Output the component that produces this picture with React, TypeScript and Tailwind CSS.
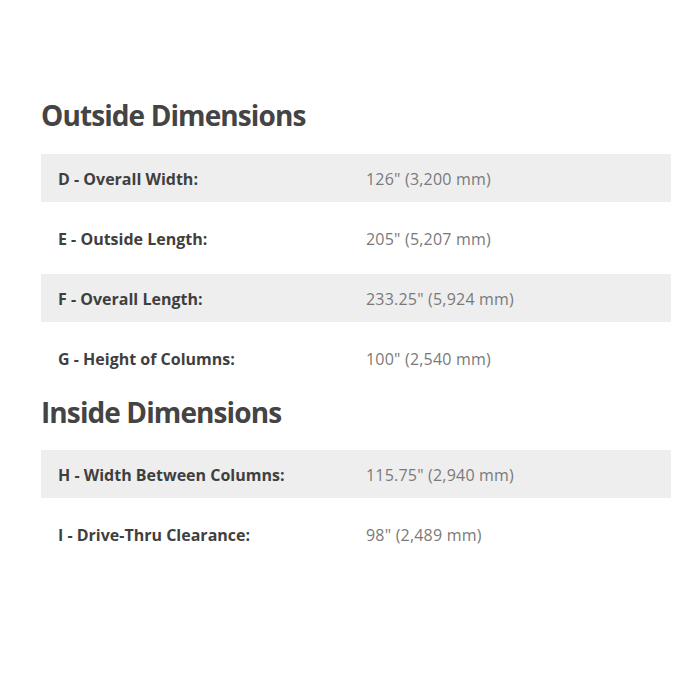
import React from "react";

const outside = [
  { label: "D - Overall Width:", value: "126\" (3,200 mm)" },
  { label: "E - Outside Length:", value: "205\" (5,207 mm)" },
  { label: "F - Overall Length:", value: "233.25\" (5,924 mm)" },
  { label: "G - Height of Columns:", value: "100\" (2,540 mm)" },
];

const inside = [
  { label: "H - Width Between Columns:", value: "115.75\" (2,940 mm)" },
  { label: "I - Drive-Thru Clearance:", value: "98\" (2,489 mm)" },
];

const SpecRows = ({ rows }: { rows: { label: string; value: string }[] }) => (
  <div className="flex flex-col gap-3">
    {rows.map((row, i) => (
      <div
        key={row.label}
        className={`flex items-center h-12 pt-0.5 ${i % 2 === 0 ? "bg-[#eeeeee]" : "bg-white"}`}
      >
        <div className="w-[325px] pl-[17px] text-[16px] font-bold text-[#3f3f3f]">
          {row.label}
        </div>
        <div className="text-[16px] text-[#7a7a7a] tracking-[0.2px]">{row.value}</div>
      </div>
    ))}
  </div>
);

export default function App() {
  return (
    <div
      className="w-[700px] h-[700px] bg-white pt-[98px] pl-[41px]"
      style={{ fontFamily: '"Open Sans", "Noto Sans", sans-serif' }}
    >
      <div className="w-[630px]">
        <h2 className="text-[28px] leading-[34px] font-bold text-[#444444] tracking-[-0.9px] mb-[22px]">
          Outside Dimensions
        </h2>
        <SpecRows rows={outside} />
        <h2 className="text-[28px] leading-[34px] font-bold text-[#444444] tracking-[-0.9px] mt-[13px] mb-[21px]">
          Inside Dimensions
        </h2>
        <SpecRows rows={inside} />
      </div>
    </div>
  );
}
